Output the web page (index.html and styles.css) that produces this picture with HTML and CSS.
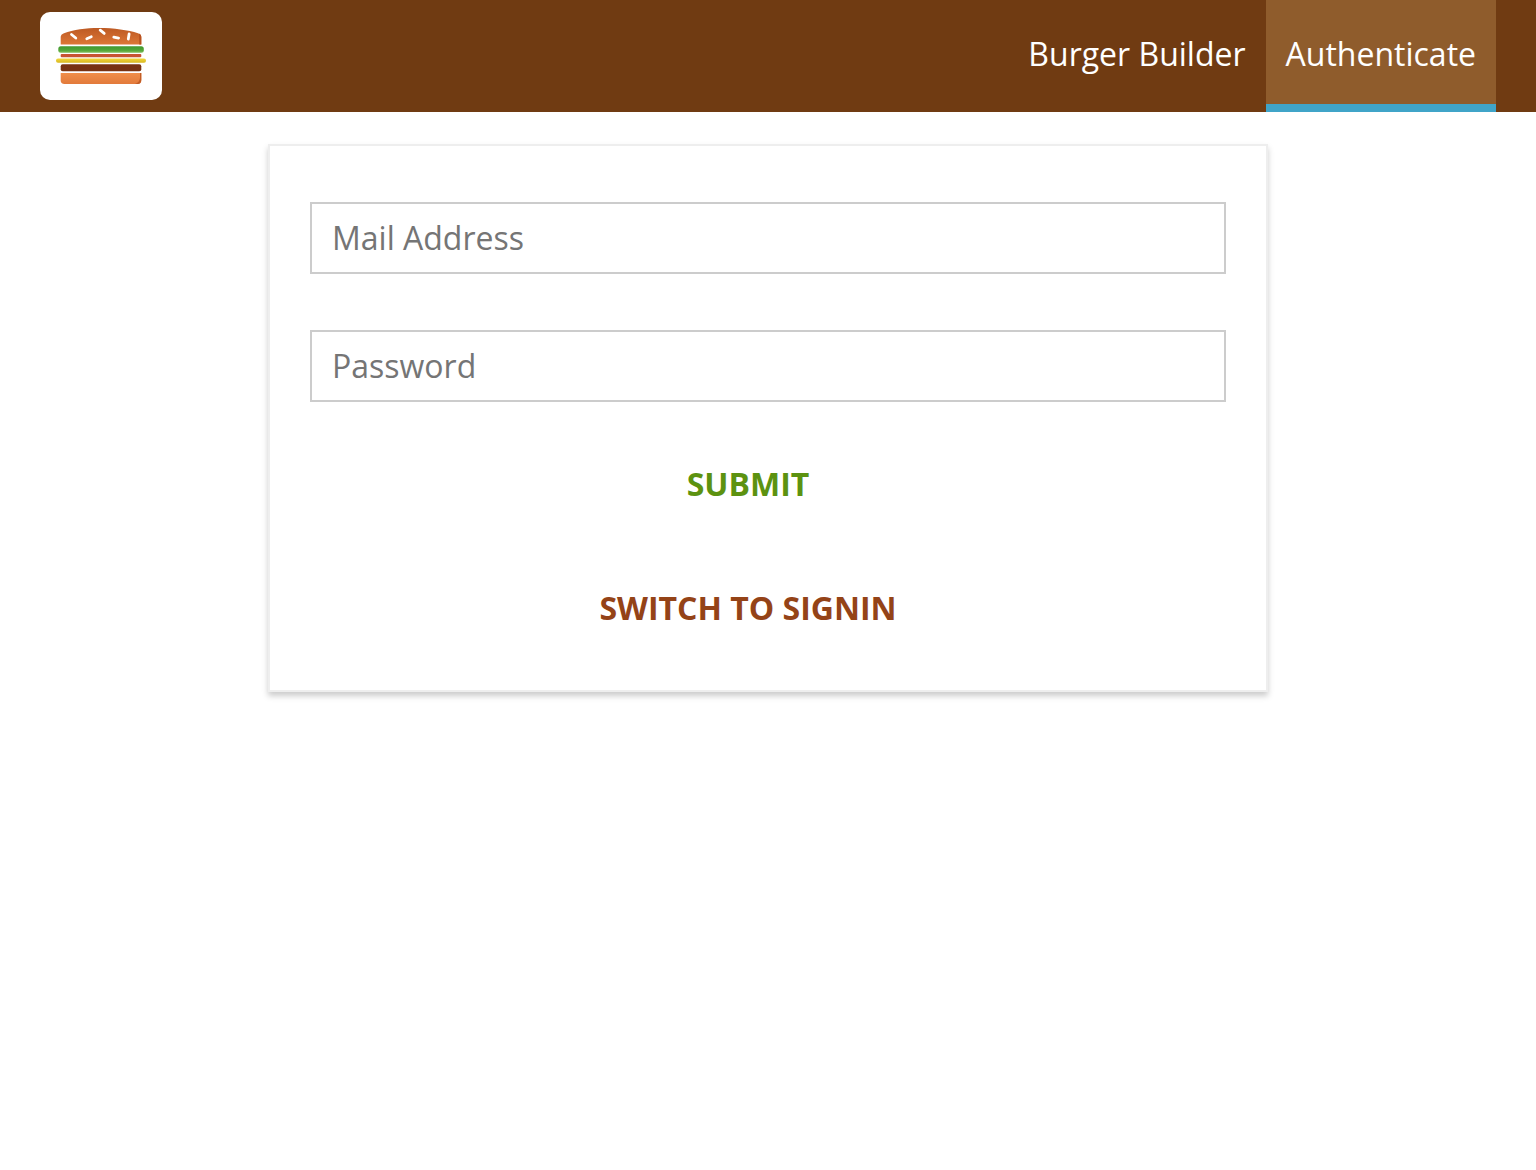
FILE: index.html
```html
<!DOCTYPE html>
<html lang="en">
<head>
  <meta charset="utf-8">
  <meta name="viewport" content="width=device-width, initial-scale=1">
  <title>Burger Builder</title>
  <link rel="stylesheet" href="styles.css">
</head>
<body>
  <header class="toolbar">
    <div class="logo">
      <svg class="logo-image" viewBox="0 0 90 56" role="img" aria-label="Burger">
        <defs>
          <linearGradient id="bun-top" x1="0" y1="0" x2="0" y2="1">
            <stop offset="0" stop-color="#bd5a24"/>
            <stop offset="1" stop-color="#dd7636"/>
          </linearGradient>
          <linearGradient id="bun-bottom" x1="0" y1="0" x2="0" y2="1">
            <stop offset="0" stop-color="#f08e4a"/>
            <stop offset="1" stop-color="#e27a3b"/>
          </linearGradient>
          <linearGradient id="salad" x1="0" y1="0" x2="0" y2="1">
            <stop offset="0" stop-color="#429730"/>
            <stop offset=".6" stop-color="#4fa536"/>
            <stop offset="1" stop-color="#80bd5c"/>
          </linearGradient>
          <linearGradient id="cheese" x1="0" y1="0" x2="0" y2="1">
            <stop offset="0" stop-color="#f0d63c"/>
            <stop offset="1" stop-color="#d9b820"/>
          </linearGradient>
        </defs>
        <path fill="url(#bun-top)" d="M4.700 16.600V9Q4.700 6.500 8 5.200C17 1.800 30 0 43 0C58 0 72 2 82 5.200Q85.300 6.300 85.300 9V16.600Z"/>
        <path fill="#b9521f" d="M83 5.600Q85.300 6.300 85.300 9V16.600H83.300Z"/>
        <g stroke="#fff" stroke-width="2.800" stroke-linecap="round">
          <path d="M15.500 6.500L19.800 10M30.800 10.700L35.300 8.800M44.200 2.200L48.200 5.400M57.800 9.200L62.600 10.100M73.100 6L72.300 11"/>
        </g>
        <rect x="2.300" y="18.200" width="85.500" height="6.500" rx="2.500" fill="url(#salad)"/>
        <rect x="4.700" y="26" width="80.600" height="3.200" rx="1" fill="#c75432"/>
        <rect x="0" y="30.600" width="90" height="4.100" rx="2" fill="url(#cheese)"/>
        <rect x="4.700" y="36.300" width="80.600" height="7" rx="2" fill="#773213"/>
        <path fill="url(#bun-bottom)" d="M4.700 45H85.300V52Q85.300 56 81.500 56H8.500Q4.700 55.600 4.700 52.500Z"/>
        <path fill="#c25c25" d="M84 45H85.300V52Q85.300 56 81.500 56H79Q83.600 54.500 84 50Z"/>
      </svg>
    </div>
    <nav class="nav">
      <a class="nav-link" href="#builder">Burger Builder</a>
      <a class="nav-link nav-link-active" href="#auth" aria-current="page">Authenticate</a>
    </nav>
  </header>
  <main class="content">
    <section class="auth">
      <form>
        <div class="field">
          <input class="field-input" type="email" placeholder="Mail Address" aria-label="Mail Address">
        </div>
        <div class="field">
          <input class="field-input" type="password" placeholder="Password" aria-label="Password">
        </div>
        <button class="button button-success" type="submit">SUBMIT</button>
      </form>
      <button class="button button-danger" type="button">SWITCH TO SIGNIN</button>
    </section>
  </main>
</body>
</html>
```
FILE: styles.css
```css
* {
  box-sizing: border-box;
}

body {
  margin: 0;
  background: #fff;
  font-family: "Open Sans", sans-serif;
  font-size: 32px;
  line-height: 44px;
}

.toolbar {
  display: flex;
  justify-content: space-between;
  align-items: center;
  height: 112px;
  padding: 0 40px;
  background: #703b12;
}

.logo {
  padding: 16px;
  border-radius: 10px;
  background: #fff;
}

.logo-image {
  display: block;
  width: 90px;
  height: 56px;
}

.nav {
  display: flex;
  height: 100%;
}

.nav-link {
  padding: 32px 20px 28px;
  border-bottom: 8px solid transparent;
  color: #fff;
  text-decoration: none;
}

.nav-link:hover,
.nav-link-active {
  border-bottom-color: #40a4c8;
  background: #8f5c2c;
}

.content {
  padding: 32px 0;
}

.auth {
  width: 80%;
  max-width: 1000px;
  margin: 0 auto;
  padding: 20px;
  border: 2px solid #eee;
  box-shadow: 0 4px 6px #ccc;
  text-align: center;
}

.field {
  padding: 36px 20px 20px;
}

.field-input {
  display: block;
  width: 100%;
  padding: 12px 20px;
  border: 2px solid #ccc;
  background: #fff;
  font: inherit;
}

.field-input::placeholder {
  color: #757575;
}

.button {
  margin: 20px 20px 20px 0;
  padding: 20px 20px 20px 0;
  border: 0;
  background: transparent;
  font: inherit;
  font-weight: bold;
  cursor: pointer;
}

.button-success {
  color: #5c9210;
}

.button-danger {
  color: #944317;
}
```
